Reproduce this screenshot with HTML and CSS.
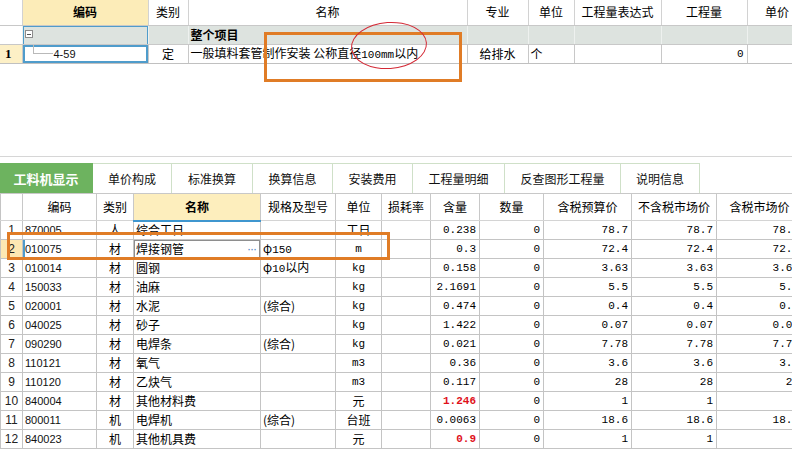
FILE: index.html
```html
<!DOCTYPE html>
<html lang="zh">
<head>
<meta charset="utf-8">
<title>工料机显示</title>
<link rel="stylesheet" href="styles.css">
</head>
<body>
<div class="app">
  <div class="top">
    <table class="grid grid-top">
      <colgroup>
        <col class="c22"><col class="c126"><col class="c40"><col class="c279"><col class="c61"><col class="c46"><col class="c87"><col class="c86"><col class="c60">
      </colgroup>
      <tr class="hdr">
        <td class="rn"></td><td class="sel-h b">编码</td><td>类别</td><td>名称</td><td>专业</td><td>单位</td><td>工程量表达式</td><td>工程量</td><td>单价</td>
      </tr>
      <tr class="grp">
        <td class="rn blank"></td>
        <td class="code-grp"><span class="minus"></span></td>
        <td></td><td class="b l">整个项目</td><td></td><td></td><td></td><td></td><td></td>
      </tr>
      <tr class="row">
        <td class="rn rn-sel">1</td>
        <td class="code-sel"><div class="treecell"><span class="tree"></span><span class="num code">4-59</span></div></td>
        <td class="c">定</td>
        <td class="l">一般填料套管制作安装 公称直径<span class="num">100mm</span>以内</td>
        <td class="c">给排水</td>
        <td class="l">个</td>
        <td></td>
        <td class="r num">0</td>
        <td></td>
      </tr>
    </table>
  </div>

  <div class="tabs">
    <div class="tab active w93">工料机显示</div>
    <div class="tab w79">单价构成</div>
    <div class="tab w81">标准换算</div>
    <div class="tab w80">换算信息</div>
    <div class="tab w80">安装费用</div>
    <div class="tab w92">工程量明细</div>
    <div class="tab w116">反查图形工程量</div>
    <div class="tab w79">说明信息</div>
  </div>

  <table class="grid grid-bottom">
    <colgroup>
      <col class="c22"><col class="c74"><col class="c37"><col class="c127"><col class="c75"><col class="c46"><col class="c49"><col class="c49"><col class="c64"><col class="c88"><col class="c85"><col class="c86">
    </colgroup>
    <tr class="hdr2">
      <td class="rn"></td><td>编码</td><td>类别</td><td class="sel-h2 b">名称</td><td>规格及型号</td><td>单位</td><td>损耗率</td><td>含量</td><td>数量</td><td>含税预算价</td><td>不含税市场价</td><td>含税市场价</td>
    </tr>
    <tr class="row"><td class="rn">1</td><td class="code l">870005</td><td class="c">人</td><td class="l">综合工日</td><td></td><td class="c">工日</td><td></td><td class="r num">0.238</td><td class="r num">0</td><td class="r num">78.7</td><td class="r num">78.7</td><td class="r num">78.7</td></tr>
    <tr class="row"><td class="rn rn-sel2">2</td><td class="code l code-edit">010075</td><td class="c">材</td><td class="name-edit"><div class="editbox"><span>焊接钢管</span><span class="dots">···</span></div></td><td class="l">φ<span class="num">150</span></td><td class="c num">m</td><td></td><td class="r num">0.3</td><td class="r num">0</td><td class="r num">72.4</td><td class="r num">72.4</td><td class="r num">72.4</td></tr>
    <tr class="row"><td class="rn">3</td><td class="code l">010014</td><td class="c">材</td><td class="l">圆钢</td><td class="l">φ<span class="num">10</span>以内</td><td class="c num">kg</td><td></td><td class="r num">0.158</td><td class="r num">0</td><td class="r num">3.63</td><td class="r num">3.63</td><td class="r num">3.63</td></tr>
    <tr class="row"><td class="rn">4</td><td class="code l">150033</td><td class="c">材</td><td class="l">油麻</td><td></td><td class="c num">kg</td><td></td><td class="r num">2.1691</td><td class="r num">0</td><td class="r num">5.5</td><td class="r num">5.5</td><td class="r num">5.5</td></tr>
    <tr class="row"><td class="rn">5</td><td class="code l">020001</td><td class="c">材</td><td class="l">水泥</td><td class="l">(综合)</td><td class="c num">kg</td><td></td><td class="r num">0.474</td><td class="r num">0</td><td class="r num">0.4</td><td class="r num">0.4</td><td class="r num">0.4</td></tr>
    <tr class="row"><td class="rn">6</td><td class="code l">040025</td><td class="c">材</td><td class="l">砂子</td><td></td><td class="c num">kg</td><td></td><td class="r num">1.422</td><td class="r num">0</td><td class="r num">0.07</td><td class="r num">0.07</td><td class="r num">0.07</td></tr>
    <tr class="row"><td class="rn">7</td><td class="code l">090290</td><td class="c">材</td><td class="l">电焊条</td><td class="l">(综合)</td><td class="c num">kg</td><td></td><td class="r num">0.021</td><td class="r num">0</td><td class="r num">7.78</td><td class="r num">7.78</td><td class="r num">7.78</td></tr>
    <tr class="row"><td class="rn">8</td><td class="code l">110121</td><td class="c">材</td><td class="l">氧气</td><td></td><td class="c num">m3</td><td></td><td class="r num">0.36</td><td class="r num">0</td><td class="r num">3.6</td><td class="r num">3.6</td><td class="r num">3.6</td></tr>
    <tr class="row"><td class="rn">9</td><td class="code l">110120</td><td class="c">材</td><td class="l">乙炔气</td><td></td><td class="c num">m3</td><td></td><td class="r num">0.117</td><td class="r num">0</td><td class="r num">28</td><td class="r num">28</td><td class="r num">28</td></tr>
    <tr class="row"><td class="rn">10</td><td class="code l">840004</td><td class="c">材</td><td class="l">其他材料费</td><td></td><td class="c">元</td><td></td><td class="r num red">1.246</td><td class="r num">0</td><td class="r num">1</td><td class="r num">1</td><td class="r num">1</td></tr>
    <tr class="row"><td class="rn">11</td><td class="code l">800011</td><td class="c">机</td><td class="l">电焊机</td><td class="l">(综合)</td><td class="c">台班</td><td></td><td class="r num">0.0063</td><td class="r num">0</td><td class="r num">18.6</td><td class="r num">18.6</td><td class="r num">18.6</td></tr>
    <tr class="row"><td class="rn">12</td><td class="code l">840023</td><td class="c">机</td><td class="l">其他机具费</td><td></td><td class="c">元</td><td></td><td class="r num red">0.9</td><td class="r num">0</td><td class="r num">1</td><td class="r num">1</td><td class="r num">1</td></tr>
  </table>

  <div class="mark mark-top"></div>
  <div class="ellipse"></div>
  <div class="mark mark-bottom"></div>
</div>
</body>
</html>
```
FILE: styles.css
```css
* { box-sizing: border-box; }
html, body { margin: 0; padding: 0; background: #fff; }
body {
  font-family: "Noto Sans CJK SC", "Liberation Sans", sans-serif;
  font-size: 12px;
  color: #000;
}
.app {
  position: relative;
  width: 792px;
  height: 471px;
  overflow: hidden;
  background: #fff;
}

.top {
  height: 157px;
  border-bottom: 1px solid #d6d6d6;
}

.grid {
  border-collapse: collapse;
  table-layout: fixed;
}
.grid-top { width: 807px; }
.grid-bottom { width: 802px; border-left: 1px solid #c4c4c4; }

.grid td {
  padding: 0;
  white-space: nowrap;
  overflow: hidden;
  line-height: 16px;
  text-align: center;
  vertical-align: middle;
}

.c22 { width: 22px; } .c126 { width: 126px; } .c40 { width: 40px; } .c279 { width: 279px; }
.c61 { width: 61px; } .c46 { width: 46px; } .c87 { width: 87px; } .c86 { width: 86px; } .c60 { width: 60px; }
.c74 { width: 74px; } .c37 { width: 37px; } .c127 { width: 127px; } .c75 { width: 75px; }
.c49 { width: 49px; } .c64 { width: 64px; } .c88 { width: 88px; } .c85 { width: 85px; }

.b { font-weight: bold; }
.l { text-align: left !important; padding-left: 2px !important; }
.c { text-align: center; }
.r { text-align: right !important; padding-right: 3px !important; }

.num {
  font-family: "Liberation Mono", "DejaVu Sans Mono", monospace;
  font-size: 11px;
}
.code {
  font-family: "Liberation Sans", "DejaVu Sans", sans-serif;
  font-size: 11px;
  color: #111;
}
.red { color: #e0101a; font-weight: bold; }

/* top grid */
.grid-top tr.hdr td { height: 25px; border-right: 1px solid #d2d2d2; border-bottom: 1px solid #c8c8c8; }
.grid-top tr.hdr td.sel-h { background: #fcecb8; }
.grid-top tr.grp td { height: 19px; background: #dde3df; border-right: 1px solid #eef1ef; border-bottom: 1px solid #c8c8c8; }
.grid-top tr.grp td.blank { background: #fff; }
.grid-top tr.row td { height: 19px; border-right: 1px solid #c8c8c8; border-bottom: 1px solid #c0c0c0; }
.grid-top td.rn { border-right: 1px solid #d2d2d2; }
.grid-top td.rn-sel {
  background: #fdf0c6;
  font-family: "Liberation Serif", serif;
  font-weight: bold;
  font-size: 13px;
  text-align: left;
  padding-left: 5px;
}
.code-grp {
  text-align: left !important;
  padding-left: 2px !important;
  box-shadow: inset 1px 1px 0 #4f9ccb, inset -1px 0 0 #4f9ccb;
}
.minus {
  display: inline-block;
  width: 8px;
  height: 8px;
  border: 1px solid #8c8c8c;
  background: #fff linear-gradient(#555, #555) no-repeat center / 4px 1px;
  vertical-align: middle;
  margin-top: -4px;
}
.code-sel {
  box-shadow: inset 0 0 0 2px #4f9ccb;
  vertical-align: top !important;
}
.treecell {
  display: flex;
  align-items: flex-start;
  padding-left: 10px;
  height: 18px;
}
.tree {
  width: 20px;
  height: 9px;
  border-left: 1px solid #b9b9b9;
  border-bottom: 1px solid #b9b9b9;
  margin-right: 1px;
}
.treecell .code { line-height: 18px; }

/* tabs */
.tabs {
  display: flex;
  height: 30px;
  margin-top: 6px;
}
.tab {
  display: flex;
  align-items: center;
  justify-content: center;
  border-top: 1px solid #cfe0c8;
  border-right: 1px solid #cfe0c8;
  font-size: 12px;
  color: #111;
}
.tab.active {
  background: #6db35f;
  border-color: #6db35f;
  color: #fff;
  font-weight: bold;
  font-size: 13px;
}
.w93 { width: 93px; } .w79 { width: 79px; } .w81 { width: 81px; } .w80 { width: 80px; }
.w92 { width: 92px; } .w116 { width: 116px; }

/* bottom grid */
.grid-bottom tr.hdr2 td {
  height: 27px;
  border-top: 1px solid #c8c8c8;
  border-right: 1px solid #c8c8c8;
  border-bottom: 1px solid #d4d4d4;
  background: #fff;
}
.grid-bottom tr.hdr2 td.sel-h2 {
  background: #fdeebd;
  border-bottom: 2px solid #3f96cf;
}
.grid-bottom tr.row td {
  height: 19px;
  border-right: 1px solid #c4c4c4;
  border-bottom: 1px solid #c4c4c4;
}
.grid-bottom td.rn {
  font-family: "Liberation Sans", sans-serif;
  font-size: 12px;
  color: #222;
}
.grid-bottom td.rn-sel2 { background: #fde8b3; }
.code-edit { box-shadow: inset 2px 0 0 #4f9ccb; }
.name-edit { box-shadow: inset 0 0 0 1px #8e8e8e; }
.editbox {
  display: flex;
  justify-content: space-between;
  align-items: center;
  padding: 0 4px 0 2px;
}
.dots {
  color: #4a80c4;
  font-family: "Liberation Sans", sans-serif;
  font-size: 12px;
  letter-spacing: -1px;
}

/* annotations */
.mark {
  position: absolute;
  border: 3px solid #e07c26;
}
.mark-top { left: 264px; top: 32px; width: 198px; height: 50px; }
.mark-bottom { left: 7px; top: 232px; width: 383px; height: 28px; }
.ellipse {
  position: absolute;
  left: 351px;
  top: 22px;
  width: 76px;
  height: 47px;
  border: 1.5px solid #d42a36;
  border-radius: 50%;
  transform: rotate(-4deg);
}
```
